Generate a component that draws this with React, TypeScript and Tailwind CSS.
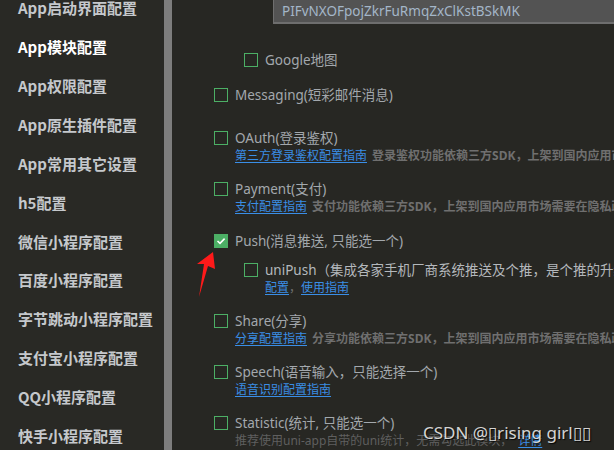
import React from "react";

const FONT = '"Segoe UI", "Noto Sans", "Noto Sans CJK SC", sans-serif';
const CJK = '"Noto Sans CJK SC", sans-serif';

const sideItems = [
  "App启动界面配置",
  "App模块配置",
  "App权限配置",
  "App原生插件配置",
  "App常用其它设置",
  "h5配置",
  "微信小程序配置",
  "百度小程序配置",
  "字节跳动小程序配置",
  "支付宝小程序配置",
  "QQ小程序配置",
  "快手小程序配置",
];

function Box({ checked }: { checked?: boolean }) {
  if (checked) {
    return (
      <div className="w-[14px] h-[14px] bg-[#4caf65] flex items-center justify-center shrink-0">
        <svg width="10" height="8" viewBox="0 0 10 8">
          <path d="M1.5 4 L4 6.3 L8.6 1.6" stroke="#ffffff" strokeWidth="1.6" fill="none" />
        </svg>
      </div>
    );
  }
  return <div className="w-[14px] h-[14px] border border-[#4caf65] shrink-0" />;
}

function Label({ checked, children, nested }: { checked?: boolean; children: React.ReactNode; nested?: boolean }) {
  return (
    <div className={"flex items-center h-[18px] gap-[7px] " + (nested ? "pl-[30px]" : "")}>
      <Box checked={checked} />
      <span className="text-[13.5px] text-[#a3a8ad] whitespace-nowrap">{children}</span>
    </div>
  );
}

function Desc({ link, text, nested }: { link?: string; text?: string; nested?: boolean }) {
  return (
    <div className={"h-[18px] flex items-center text-[12px] whitespace-nowrap " + (nested ? "pl-[51px]" : "pl-[21px]")}>
      {link && <span className="text-[#3a8ee6] underline underline-offset-2">{link}</span>}
      {text && <span className="text-[#6f6f6f] font-bold ml-[5px]">{text}</span>}
    </div>
  );
}

export default function App() {
  return (
    <div className="w-[614px] h-[450px] overflow-hidden flex bg-[#272723] relative" style={{ fontFamily: FONT }}>
      <div className="w-[164px] h-full bg-[#292925] shrink-0 overflow-hidden">
        <div className="mt-[-11px]" style={{ fontFamily: CJK }}>
          {sideItems.map((t, i) => (
            <div
              key={t}
              className={
                "h-[38.9px] flex items-center pl-[18px] text-[15px] font-bold whitespace-nowrap " +
                (i === 1 ? "text-[#ffffff]" : "text-[#c5c8cc]")
              }
            >
              {t}
            </div>
          ))}
        </div>
      </div>
      <div className="w-[8px] h-full bg-[#7d7d7d] shrink-0" />
      <div className="flex-1 h-full overflow-hidden relative">
        <div className="ml-[101px] h-[24px] bg-[#535353] border-l border-b-2 border-[#6e6e6e] flex items-center pl-[8px] text-[13.5px] text-[#a4b6c8] whitespace-nowrap">
          PIFvNXOFpojZkrFuRmqZxClKstBSkMK
        </div>
        <div className="pl-[42px]">
          <div className="mt-[27px]">
            <Label nested>Google地图</Label>
          </div>
          <div className="mt-[17px]">
            <Label>Messaging(短彩邮件消息)</Label>
          </div>
          <div className="mt-[25px]">
            <Label>OAuth(登录鉴权)</Label>
            <Desc link="第三方登录鉴权配置指南" text="登录鉴权功能依赖三方SDK，上架到国内应用市场需要在隐私政策中说明" />
          </div>
          <div className="mt-[15px]">
            <Label>Payment(支付)</Label>
            <Desc link="支付配置指南" text="支付功能依赖三方SDK，上架到国内应用市场需要在隐私政策中说明" />
          </div>
          <div className="mt-[16px]">
            <Label checked>Push(消息推送, 只能选一个)</Label>
          </div>
          <div className="mt-[11px]">
            <div className="flex items-center h-[18px] gap-[7px] pl-[30px]">
              <Box />
              <span className="text-[13.5px] text-[#b4b8bc] whitespace-nowrap">uniPush（集成各家手机厂商系统推送及个推，是个推的升级版）</span>
            </div>
            <div className="h-[18px] flex items-center text-[12px] whitespace-nowrap pl-[51px]">
              <span className="text-[#3a8ee6] underline underline-offset-2">配置</span>
              <span className="text-[#6f6f6f]">，</span>
              <span className="text-[#3a8ee6] underline underline-offset-2">使用指南</span>
            </div>
          </div>
          <div className="mt-[15px]">
            <Label>Share(分享)</Label>
            <Desc link="分享配置指南" text="分享功能依赖三方SDK，上架到国内应用市场需要在隐私政策中说明" />
          </div>
          <div className="mt-[15px]">
            <Label>Speech(语音输入，只能选择一个)</Label>
            <Desc link="语音识别配置指南" />
          </div>
          <div className="mt-[15px]">
            <Label>Statistic(统计, 只能选一个)</Label>
            <div className="h-[18px] flex items-center text-[12px] whitespace-nowrap pl-[21px]">
              <span className="text-[#5f5f5f]">推荐使用uni-app自带的uni统计，无需勾选此模块，</span>
              <span className="text-[#3a8ee6] underline underline-offset-2 ml-[6px]">详情</span>
            </div>
          </div>
        </div>
      </div>
      <svg className="absolute left-0 top-0 pointer-events-none" width="614" height="450">
        <polygon points="213,252 215,269 208,266 199,297 204,264 197,264" fill="#ff1a1a" />
      </svg>
      <div
        className="absolute left-[423px] top-[420px] text-[17px] text-[#e6e6e6] whitespace-nowrap opacity-90"
        style={{ textShadow: "1px 1px 1px #000" }}
      >
        CSDN @▯rising girl▯▯
      </div>
    </div>
  );
}
